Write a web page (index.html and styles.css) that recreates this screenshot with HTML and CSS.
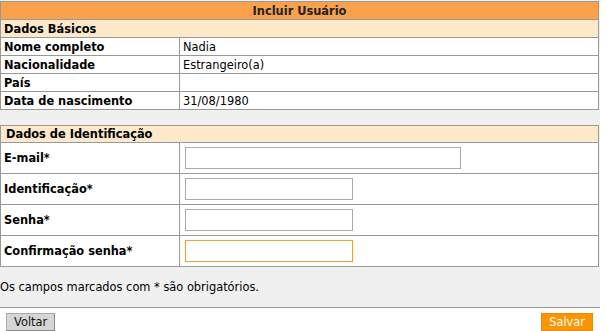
FILE: index.html
```html
<!DOCTYPE html>
<html lang="pt-BR">
<head>
<meta charset="UTF-8">
<title>Incluir Usuário</title>
<link rel="stylesheet" href="styles.css">
</head>
<body>
<div class="page">
    <table class="grid">
        <tr><th colspan="2" class="title">Incluir Usuário</th></tr>
        <tr><td colspan="2" class="section">Dados Básicos</td></tr>
        <tr><td class="lbl">Nome completo</td><td>Nadia</td></tr>
        <tr><td class="lbl">Nacionalidade</td><td>Estrangeiro(a)</td></tr>
        <tr><td class="lbl">País</td><td></td></tr>
        <tr><td class="lbl">Data de nascimento</td><td>31/08/1980</td></tr>
    </table>

    <table class="grid ident">
        <tr><td colspan="2" class="section">Dados de Identificação</td></tr>
        <tr><td class="lbl">E-mail*</td><td><input type="text" class="wide"></td></tr>
        <tr><td class="lbl">Identificação*</td><td><input type="text" class="short"></td></tr>
        <tr><td class="lbl">Senha*</td><td><input type="password" class="short"></td></tr>
        <tr><td class="lbl">Confirmação senha*</td><td><input type="password" class="short focus" autofocus></td></tr>
    </table>

    <p class="note">Os campos marcados com * são obrigatórios.</p>

    <div class="actions">
        <button type="button" class="btn back">Voltar</button>
        <button type="button" class="btn save">Salvar</button>
    </div>
</div>
</body>
</html>
```

FILE: styles.css
```css
body { margin: 0; background: #fff; font-family: "DejaVu Sans", Verdana, sans-serif; font-size: 11.4px; color: #000; }
.page { width: 600px; background: #f0f0f0; padding-top: 1px; }
.grid { width: 599px; border-collapse: collapse; background: #fff; border: 1px solid #999; }
.grid td, .grid th { border: 1px solid #999; padding: 0 3px; height: 17px; text-align: left; font-weight: normal; }
.grid .title { background: #fba04b; text-align: center; font-weight: bold; color: #222; }
.grid .section { background: #fde9c9; font-weight: bold; }
.grid .lbl { width: 172px; font-weight: bold; }
.ident { margin-top: 15px; }
.ident td { height: 30px; }
.ident .section { height: 16px; }
.ident td:last-child { padding-left: 5px; }
input { font-family: inherit; font-size: 12px; border: 1px solid #aaa; padding: 0 3px; box-sizing: border-box; height: 22px; margin: 0; vertical-align: middle; }
input.wide { width: 276px; }
input.short { width: 168px; }
input.focus { border-color: #e5a53c; outline: none; box-shadow: 0 0 1px #f5c878; }
.note { margin: 0; padding: 13px 0 0; height: 27px; line-height: 14px; }
.actions { background: #fff; border-top: 1px solid #999; display: flex; justify-content: space-between; padding: 5px 7px 0 6px; height: 18px; }
.btn { font-family: inherit; font-size: 11.4px; height: 18px; padding: 0 7px; border-radius: 0; cursor: pointer; }
.back { background: #d6d6d6; color: #111; border: 1px solid #aaa; border-right-color: #888; border-bottom-color: #888; }
.save { background: #fa9400; color: #fff; border: 1px solid #f08a00; }
```
